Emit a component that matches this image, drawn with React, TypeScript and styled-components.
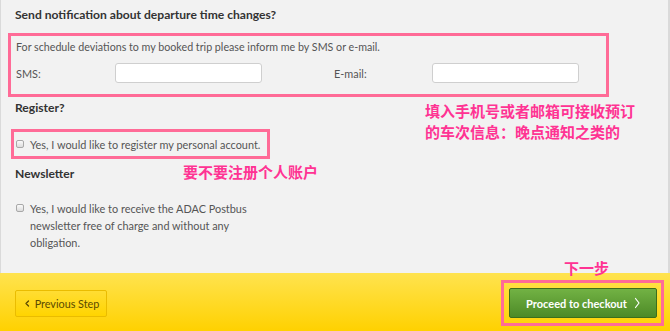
import React from "react";
import styled, { createGlobalStyle } from "styled-components";

const Global = createGlobalStyle`
  html, body { margin: 0; padding: 0; }
  body {
    width: 670px; height: 331px; overflow: hidden;
    background: #f2f2f2;
    font-family: Lato, "Open Sans", sans-serif;
  }
`;

const Page = styled.div`
  width: 670px;
  height: 331px;
  display: flex;
  flex-direction: column;
  position: relative;
`;

const Main = styled.div`
  height: 273px;
  box-sizing: border-box;
  border-left: 1px solid #dadada;
  border-right: 2px solid #dadada;
  background: #f2f2f2;
  display: flex;
  flex-direction: column;
  padding-left: 14px;
`;

const Heading = styled.h3<{ $top: number }>`
  margin: ${(p) => p.$top}px 0 0 0;
  font-size: 12.1px;
  line-height: 18px;
  font-weight: 700;
  color: #333;
`;

const HighlightBox = styled.div<{ $w: number; $h: number; $ml: number; $mt: number }>`
  box-sizing: border-box;
  width: ${(p) => p.$w}px;
  height: ${(p) => p.$h}px;
  margin-left: ${(p) => p.$ml}px;
  margin-top: ${(p) => p.$mt}px;
  border: 3px solid #ff6b97;
`;

const NotifyInner = styled.div`
  display: flex;
  flex-direction: column;
  padding: 3px 0 0 5px;
`;

const Para = styled.p`
  margin: 0;
  font-size: 10.7px;
  line-height: 16px;
  color: #555;
`;

const FieldRow = styled.div`
  display: flex;
  align-items: center;
  margin-top: 8px;
`;

const Field = styled.label<{ $labelW: number; $ml?: number }>`
  display: flex;
  align-items: center;
  font-size: 10.9px;
  color: #555;
  margin-left: ${(p) => p.$ml ?? 0}px;
  width: ${(p) => p.$labelW + 147}px;
  & > span { width: ${(p) => p.$labelW}px; }
`;

const TextInput = styled.input`
  box-sizing: border-box;
  width: 147px;
  height: 20px;
  border: 1px solid #cfcfcf;
  border-radius: 3px;
  background: #fff;
  padding: 0 4px;
  outline: none;
`;

const CheckRow = styled.div<{ $pt?: number; $pl?: number; $mt?: number }>`
  display: flex;
  align-items: flex-start;
  padding: ${(p) => p.$pt ?? 0}px 0 0 ${(p) => p.$pl ?? 0}px;
  margin-top: ${(p) => p.$mt ?? 0}px;
`;

const Box = styled.span`
  flex: none;
  width: 6px;
  height: 6px;
  margin-top: 4px;
  margin-right: 6px;
  border: 1px solid #a8a8a8;
  border-radius: 2px;
  background: linear-gradient(#fafafa, #dcdcdc);
`;

const CheckText = styled.span<{ $w?: number }>`
  font-size: 10.9px;
  line-height: 17px;
  color: #555;
  white-space: ${(p) => (p.$w ? "normal" : "nowrap")};
  ${(p) => (p.$w ? `width: ${p.$w}px;` : "")}
`;

const Footer = styled.div`
  flex: 1;
  background: linear-gradient(#ffe34f, #ffd100);
  display: flex;
  align-items: center;
  justify-content: space-between;
  padding: 0 16px 0 15px;
`;

const PrevButton = styled.button`
  box-sizing: border-box;
  width: 92px;
  height: 27px;
  border: 1px solid #eabc00;
  border-radius: 2px;
  background: linear-gradient(#ffdd33, #ffd400);
  color: #5b4a00;
  font-family: inherit;
  font-size: 10.8px;
  padding: 0;
  margin-top: 2px;
  display: flex;
  align-items: center;
  justify-content: center;
  gap: 4px;
`;

const NextWrap = styled.div`
  box-sizing: border-box;
  width: 163px;
  height: 46px;
  margin-top: 2px;
  margin-right: -10px;
  border: 3px solid #ff6b97;
  display: flex;
  align-items: center;
  justify-content: center;
  padding-left: 1px;
`;

const NextButton = styled.button`
  box-sizing: border-box;
  width: 148px;
  height: 30px;
  border: 1px solid #3c6e1c;
  border-radius: 2px;
  background: linear-gradient(#72b244, #4d8a27);
  color: #fff;
  font-family: inherit;
  font-weight: 700;
  font-size: 11px;
  padding: 0 0 0 1px;
  display: flex;
  align-items: center;
  justify-content: center;
  gap: 6px;
`;

const Note = styled.div<{ $x: number; $y: number }>`
  position: absolute;
  left: ${(p) => p.$x}px;
  top: ${(p) => p.$y}px;
  font-family: "Noto Sans CJK SC", sans-serif;
  font-weight: 700;
  font-size: 15px;
  line-height: 21px;
  color: #ff3393;
  white-space: nowrap;
`;

const Chevron = ({ dir, size, color }: { dir: "left" | "right"; size: number; color: string }) => (
  <svg width={size / 2 + 2} height={size} viewBox="0 0 6 12" fill="none">
    <path
      d={dir === "right" ? "M1.5 1.5 L5 6 L1.5 10.5" : "M4.5 4 L2 6.5 L4.5 9"}
      stroke={color}
      strokeWidth={dir === "right" ? 1.2 : 1.3}
      strokeLinecap="round"
      strokeLinejoin="round"
    />
  </svg>
);

export default function App() {
  return (
    <>
      <Global />
      <Page>
        <Main>
          <Heading $top={6}>Send notification about departure time changes?</Heading>
          <HighlightBox $w={601} $h={64} $ml={-7} $mt={9}>
            <NotifyInner>
              <Para>For schedule deviations to my booked trip please inform me by SMS or e-mail.</Para>
              <FieldRow>
                <Field $labelW={99}>
                  <span>SMS:</span>
                  <TextInput />
                </Field>
                <Field $labelW={98} $ml={72}>
                  <span>E-mail:</span>
                  <TextInput />
                </Field>
              </FieldRow>
            </NotifyInner>
          </HighlightBox>
          <Heading $top={2}>Register?</Heading>
          <HighlightBox $w={259} $h={30} $ml={-4} $mt={12}>
            <CheckRow $pt={4} $pl={2}>
              <Box />
              <CheckText>Yes, I would like to register my personal account.</CheckText>
            </CheckRow>
          </HighlightBox>
          <Heading $top={6}>Newsletter</Heading>
          <CheckRow $pl={1} $mt={17}>
            <Box />
            <CheckText $w={218}>
              Yes, I would like to receive the ADAC Postbus newsletter free of charge and without any obligation.
            </CheckText>
          </CheckRow>
        </Main>
        <Footer>
          <PrevButton>
            <Chevron dir="left" size={12} color="#5b4a00" />
            <span>Previous Step</span>
          </PrevButton>
          <NextWrap>
            <NextButton>
              <span>Proceed to checkout</span>
              <Chevron dir="right" size={12} color="#ffffff" />
            </NextButton>
          </NextWrap>
        </Footer>
        <Note $x={425} $y={100}>
          填入手机号或者邮箱可接收预订
          <br />
          的车次信息：晚点通知之类的
        </Note>
        <Note $x={183} $y={161}>要不要注册个人账户</Note>
        <Note $x={564} $y={257}>下一步</Note>
      </Page>
    </>
  );
}
